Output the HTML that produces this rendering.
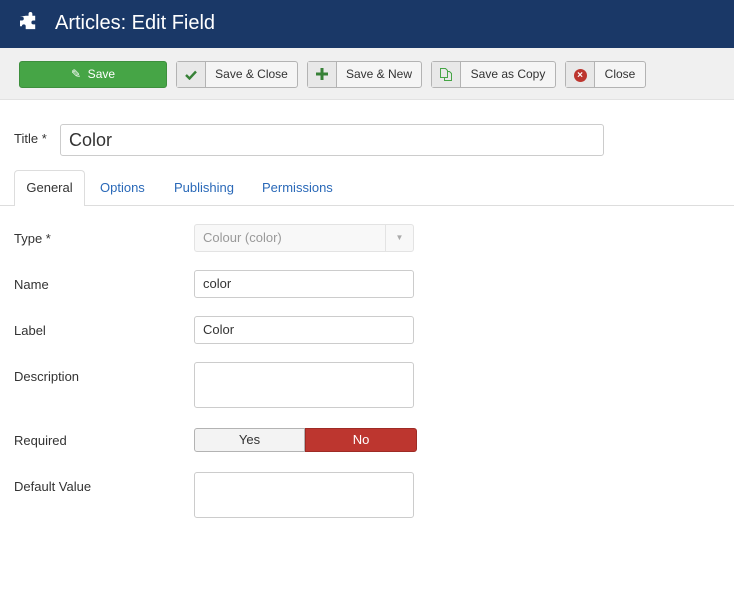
<!DOCTYPE html>
<html><head><style>
*{box-sizing:border-box}
body{margin:0;width:734px;height:590px;background:#fff;font-family:"Liberation Sans",sans-serif;font-size:13px;color:#333;position:relative;overflow:hidden}
.hdr{position:absolute;left:0;top:0;width:734px;height:48px;background:#1a3867;color:#fff}
.hdr h1{position:absolute;left:55px;top:12px;margin:0;font-size:20px;font-weight:normal}
.tb{position:absolute;left:0;top:48px;width:734px;height:52px;background:#f0f0f0;border-bottom:1px solid #e2e2e2}
.btn{position:absolute;top:13px;height:27px;border:1px solid #b3b3b3;border-radius:3px;background:#f5f5f5;font-size:12px;line-height:25px;color:#333}
.btn .ic{position:absolute;left:0;top:0;width:29px;height:25px;border-right:1px solid #b3b3b3;background:#e8e8e8;text-align:center}
.btn .t{position:absolute;left:29px;right:0;text-align:center}
.abs{position:absolute}
.inp{position:absolute;border:1px solid #ccc;border-radius:3px;background:#fff;padding-left:8px;line-height:26px;font-size:13px}
.lbl{position:absolute;left:14px;font-size:13px}
</style></head><body>
<div class="hdr">
<svg class="abs" style="left:19px;top:12px" width="20" height="20" viewBox="0 0 20 20"><path fill="#fff" d="M6 4h3V2a2 2 0 0 1 4 0v2h3v5h-2a2 2 0 0 0 0 4h2v5H6v-3a2 2 0 0 0-4 0H0V9h2a2 2 0 0 0 0-4H0z" transform="translate(1,0) scale(0.95)"/></svg>
<h1>Articles: Edit Field</h1></div>
<div class="tb">
<div class="btn" style="left:19px;width:148px;background:#46a546;border-color:#3d8f3d;color:#fff;text-align:center"><span style="font-size:12px">&#x270E;</span>&nbsp; Save</div>
<div class="btn" style="left:176px;width:122px"><div class="ic"><svg width="12" height="10" viewBox="0 0 12 10" style="margin-top:8px"><path d="M1 5l3.5 3.5L11 1.5" stroke="#378137" stroke-width="2.4" fill="none"/></svg></div><div class="t">Save &amp; Close</div></div>
<div class="btn" style="left:307px;width:115px"><div class="ic"><svg width="12" height="12" viewBox="0 0 12 12" style="margin-top:6px"><path d="M6 0v12M0 6h12" stroke="#378137" stroke-width="3"/></svg></div><div class="t">Save &amp; New</div></div>
<div class="btn" style="left:431px;width:125px"><div class="ic"><svg width="12" height="13" viewBox="0 0 12 13" style="margin-top:6px"><path d="M.5.5h5l2 2v7h-7zM7.5 3.5h2l2 2v7h-7v-3" stroke="#46a546" fill="none"/></svg></div><div class="t">Save as Copy</div></div>
<div class="btn" style="left:565px;width:81px"><div class="ic"><span style="display:inline-block;width:13px;height:13px;border-radius:50%;background:#bd362f;color:#fff;font-size:10px;line-height:13px;margin-top:6px;font-weight:bold">×</span></div><div class="t">Close</div></div>
</div>
<div class="lbl" style="top:131px">Title *</div>
<div class="inp" style="left:60px;top:124px;width:544px;height:32px;font-size:18px;line-height:30px">Color</div>
<div class="abs" style="left:14px;top:170px;width:71px;height:36px;border:1px solid #ddd;border-bottom:none;border-radius:4px 4px 0 0;background:#fff;text-align:center;line-height:34px;z-index:2">General</div>
<div class="abs" style="left:0;top:205px;width:734px;border-top:1px solid #ddd"></div>
<div class="abs" style="left:100px;top:180px;color:#2a69b8">Options</div>
<div class="abs" style="left:174px;top:180px;color:#2a69b8">Publishing</div>
<div class="abs" style="left:262px;top:180px;color:#2a69b8">Permissions</div>
<div class="lbl" style="top:231px">Type *</div>
<div class="inp" style="left:194px;top:224px;width:220px;height:28px;background:#f8f8f8;color:#999;border-color:#e3e3e3">Colour (color)<span class="abs" style="right:0;top:0;width:28px;height:26px;border-left:1px solid #e3e3e3;text-align:center;font-size:8px;color:#aaa">&#9660;</span></div>
<div class="lbl" style="top:277px">Name</div>
<div class="inp" style="left:194px;top:270px;width:220px;height:28px">color</div>
<div class="lbl" style="top:323px">Label</div>
<div class="inp" style="left:194px;top:316px;width:220px;height:28px">Color</div>
<div class="lbl" style="top:369px">Description</div>
<div class="inp" style="left:194px;top:362px;width:220px;height:46px"></div>
<div class="lbl" style="top:433px">Required</div>
<div class="abs" style="left:194px;top:428px;width:111px;height:24px;border:1px solid #b3b3b3;border-radius:3px 0 0 3px;background:#f3f3f3;text-align:center;line-height:22px">Yes</div>
<div class="abs" style="left:305px;top:428px;width:112px;height:24px;border:1px solid #9e2b25;border-radius:0 3px 3px 0;background:#bd362f;color:#fff;text-align:center;line-height:22px">No</div>
<div class="lbl" style="top:479px">Default Value</div>
<div class="inp" style="left:194px;top:472px;width:220px;height:46px"></div>
</body></html>
